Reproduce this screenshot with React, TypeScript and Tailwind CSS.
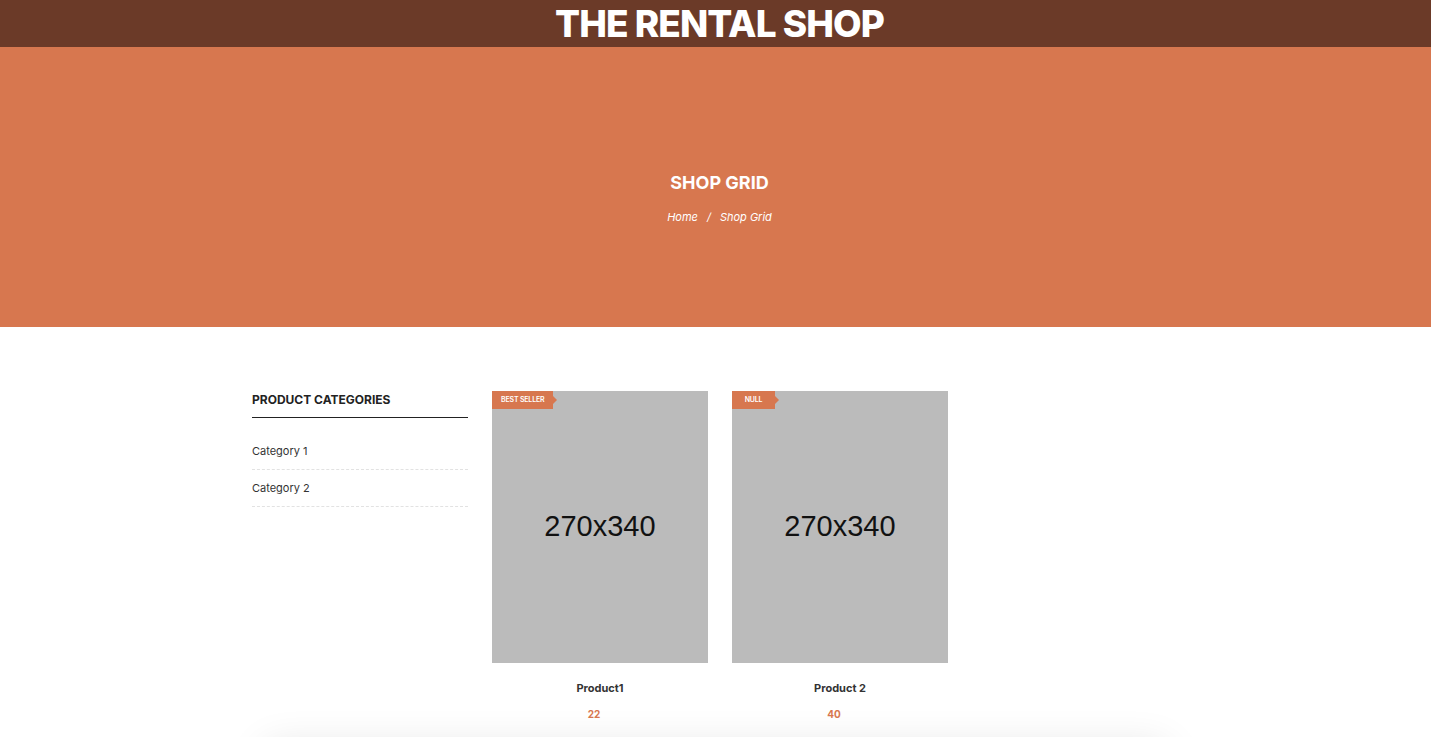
const products = [
  { id: 1, name: 'Product1', price: '22', badge: 'BEST SELLER' },
  { id: 2, name: 'Product 2', price: '40', badge: 'NULL' },
];

const categories = ['Category 1', 'Category 2'];

function ProductCard({ name, price, badge }: { name: string; price: string; badge: string }) {
  return (
    <div className="w-[216px]">
      <div className="relative h-[272px] bg-[#bbbbbb] flex items-center justify-center">
        <span className="text-[29px] text-[#111] font-['Liberation_Sans',sans-serif]">270x340</span>
        <div className="absolute left-0 top-0 flex items-center">
          <span className="h-[18px] min-w-[43px] px-[9px] bg-[#d7774f] text-white text-[7px] font-semibold leading-[18px] tracking-tight text-center">
            {badge}
          </span>
          <span className="w-0 h-0 border-y-[4px] border-y-transparent border-l-[4px] border-l-[#d7774f]" />
        </div>
      </div>
      <div className="pt-[17px] text-center">
        <h3 className="text-[11px] font-bold text-[#333] leading-[16px]">{name}</h3>
        <p className="mt-[11px] pr-3 text-[10px] font-bold text-[#d7774f] leading-[14px]">{price}</p>
      </div>
    </div>
  );
}

export default function App() {
  return (
    <div className="min-h-screen bg-white font-['Inter',sans-serif] overflow-hidden">
      {/* Top Bar */}
      <header className="h-[47px] bg-[#6b3a28] flex items-center justify-center">
        <h1 className="text-[37px] font-extrabold text-white tracking-tight leading-none pl-2">THE RENTAL SHOP</h1>
      </header>

      {/* Page Banner */}
      <section className="h-[280px] bg-[#d7774f] flex flex-col items-center pt-[124px]">
        <h2 className="text-[18px] font-bold text-white leading-6 pl-2">SHOP GRID</h2>
        <div className="mt-[14px] flex items-center gap-[9px] text-[11px] italic text-white pl-2">
          <span>Home</span>
          <span>/</span>
          <span>Shop Grid</span>
        </div>
      </section>

      {/* Shop Content */}
      <main className="pl-[252px] pt-[64px] flex gap-6 h-[410px]">
        <aside className="w-[216px]">
          <h4 className="text-[12px] font-bold text-[#222] pb-[9px] border-b border-[#222] leading-4 pt-[1px]">
            PRODUCT CATEGORIES
          </h4>
          <ul className="mt-[15px]">
            {categories.map(c => (
              <li key={c} className="py-[10px] text-[11px] text-[#333] border-b border-dashed border-[#e2e2e2] leading-[16px]">
                {c}
              </li>
            ))}
          </ul>
        </aside>
        {products.map(p => (
          <ProductCard key={p.id} {...p} />
        ))}
      </main>

      {/* Next Section */}
      <div className="mx-auto w-[900px] h-[100px] bg-white shadow-[0_0_40px_rgba(0,0,0,0.12)] mt-[10px]" />
    </div>
  );
}
